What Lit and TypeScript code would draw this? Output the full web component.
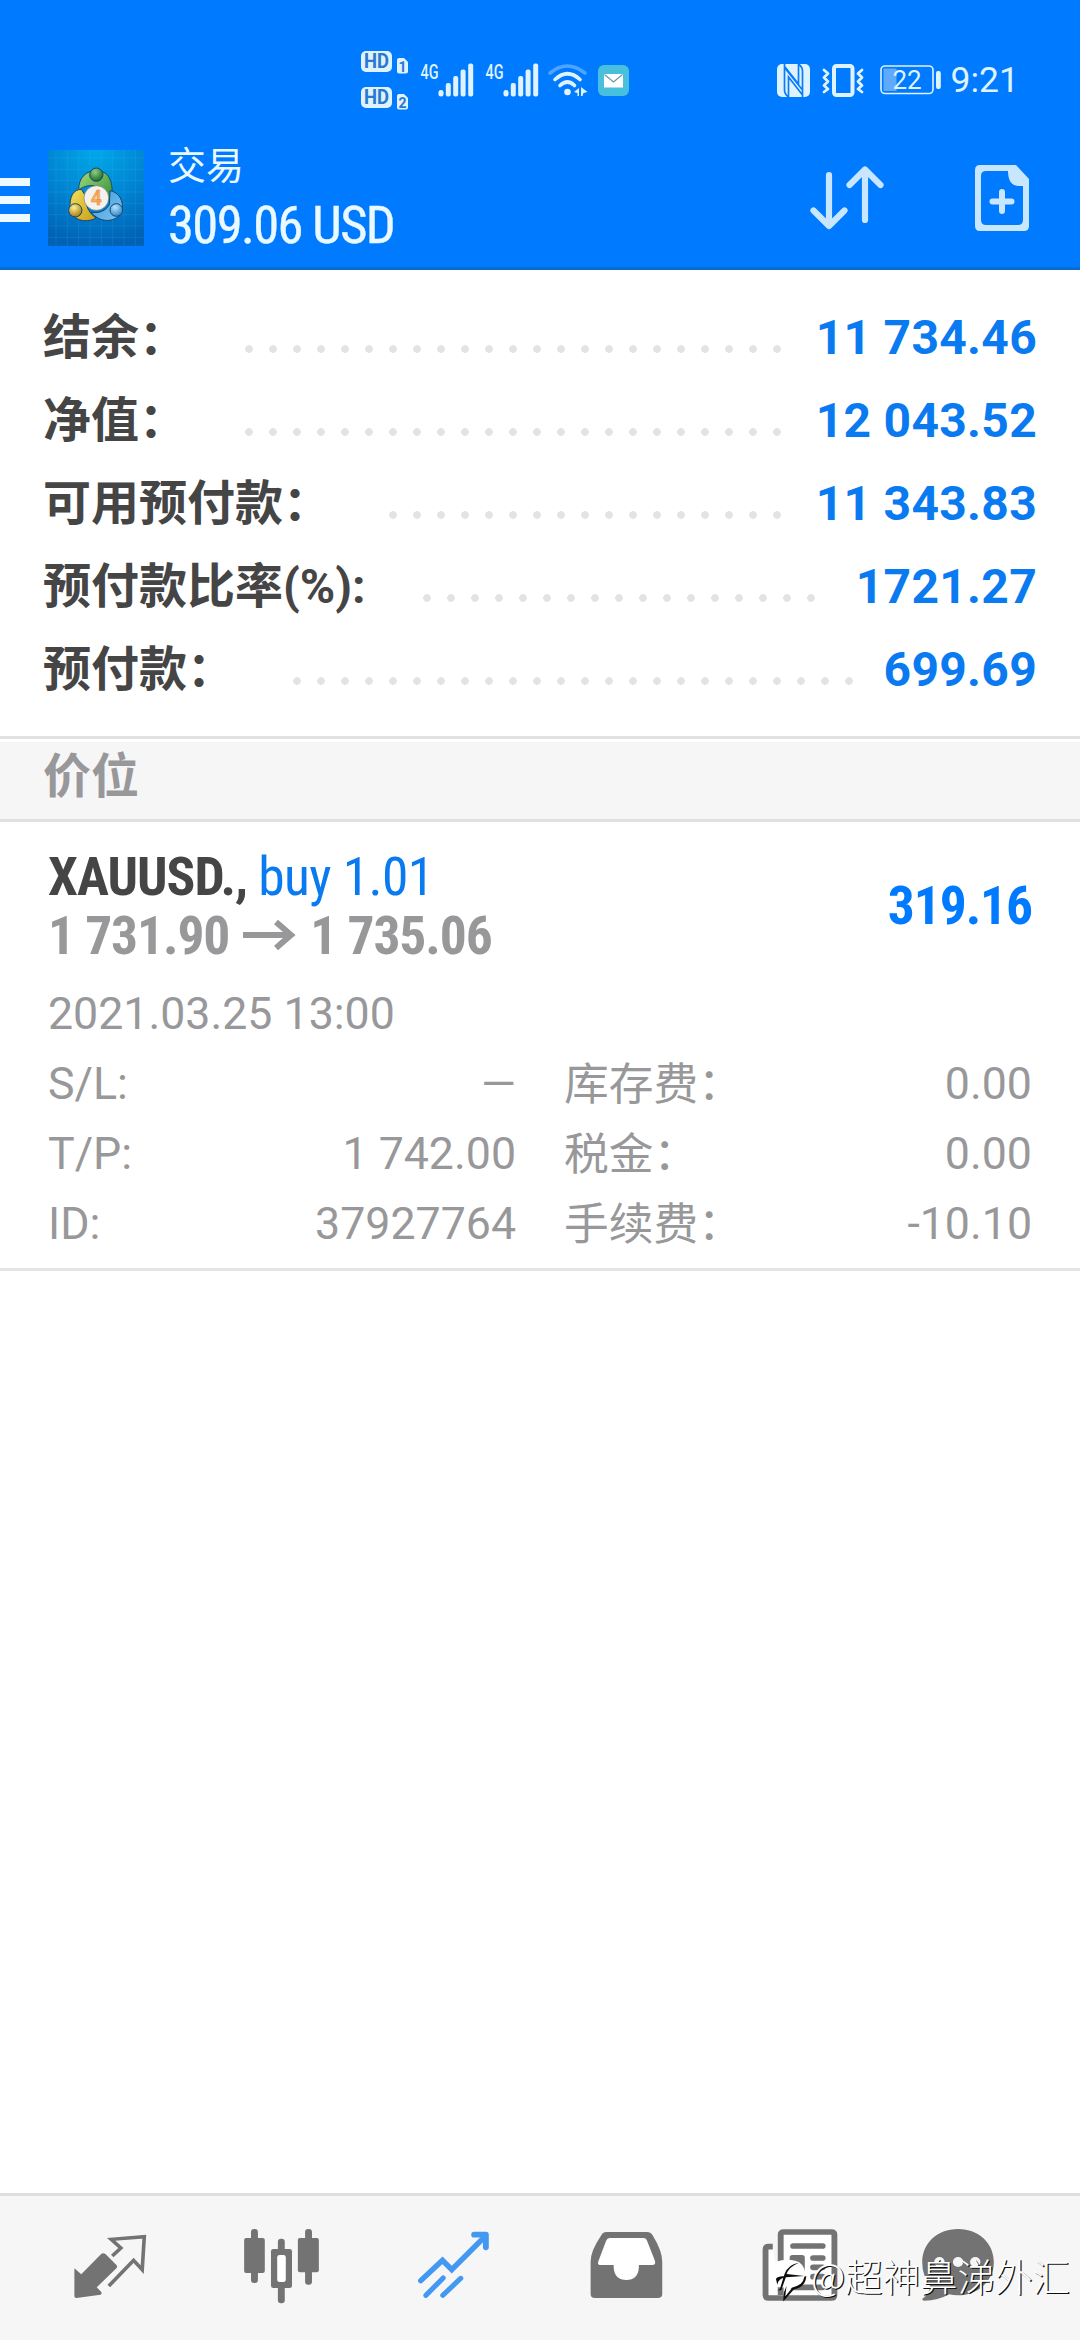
import { LitElement, html, svg, css } from "lit";
import { customElement, property } from "lit/decorators.js";

interface SummaryRow {
  label: string;
  value: string;
  dots: number;
}

const SUMMARY: SummaryRow[] = [
  { label: "结余：", value: "11 734.46", dots: 23 },
  { label: "净值：", value: "12 043.52", dots: 23 },
  { label: "可用预付款：", value: "11 343.83", dots: 17 },
  { label: "预付款比率(%):", value: "1721.27", dots: 17 },
  { label: "预付款：", value: "699.69", dots: 24 },
];

const DETAILS: [string, string][] = [
  ["S/L:", "—"],
  ["库存费：", "0.00"],
  ["T/P:", "1 742.00"],
  ["税金：", "0.00"],
  ["ID:", "37927764"],
  ["手续费：", "-10.10"],
];

@customElement("status-bar")
export class StatusBar extends LitElement {
  static styles = css`
    :host {
      display: flex;
      align-items: center;
      height: 58px;
      padding: 51px 60px 0 361px;
      color: #dff3ff;
      font-family: Roboto, "Liberation Sans", sans-serif;
    }
    svg {
      display: block;
      flex: none;
      overflow: visible;
    }
    .hd {
      margin-right: 12px;
    }
    .signal {
      margin-right: 11px;
    }
    .wifi {
      margin-left: -2px;
    }
    .mail {
      margin: 0 148px 0 9.5px;
    }
    .vibrate {
      margin: 0 16px 0 12px;
    }
    .clock {
      margin-left: 10px;
      font-size: 35.5px;
      line-height: 58px;
      white-space: nowrap;
    }
  `;

  private signal() {
    return html`<svg class="signal" width="54" height="34" viewBox="0 0 54 34" fill="currentColor">
      <text x="0.5" y="15.5" font-size="20" font-weight="500" textLength="18" lengthAdjust="spacingAndGlyphs">4G</text>
      <rect x="18.5" y="27" width="5" height="6.5" rx="2.3" />
      <rect x="25.8" y="20" width="5" height="13.5" rx="2" />
      <rect x="33.2" y="13" width="5" height="20.5" rx="2" />
      <rect x="40.6" y="6.5" width="5" height="27" rx="2" />
      <rect x="48.2" y="0.5" width="5" height="33" rx="2" />
    </svg>`;
  }

  private hd(y: number, n: string) {
    return svg`<g>
      <rect x="0" y=${y} width="31" height="21" rx="5" fill="currentColor" />
      <text x="3" y=${y + 17.3} font-size="19.5" font-weight="700" fill="#2a78cf" textLength="25" lengthAdjust="spacingAndGlyphs">HD</text>
      <path d="M36 ${y + 9}q0-2 2-2h5l4 4v9.500q0 2-2 2h-7q-2 0-2-2z" fill="currentColor" />
      <text x="41.500" y=${y + 20.5} font-size="14" font-weight="700" fill="#2a78cf" text-anchor="middle">${n}</text>
    </g>`;
  }

  render() {
    return html`
      <svg class="hd" width="47" height="58" viewBox="0 0 47 58">${this.hd(0, "1")}${this.hd(36, "2")}</svg>
      ${this.signal()}${this.signal()}
      <svg class="wifi" width="40" height="33" viewBox="0 0 40 33" fill="none" stroke="currentColor" stroke-width="3.6" stroke-linecap="round">
        <path d="M2 9Q19 -5 37 9" opacity=".35" />
        <path d="M7 15.500Q19.500 4 32 15.500" />
        <path d="M12 21.500Q19.500 14.500 26.500 21.500" />
        <circle cx="19.500" cy="28" r="3.300" fill="currentColor" stroke="none" />
        <path d="M26 28l5-4v8h-1.500v-3zM33 23l6.500 5-4 1-1 3h-1.500z" fill="currentColor" stroke="none" />
      </svg>
      <svg class="mail" width="31" height="31" viewBox="0 0 31 31">
        <rect width="31" height="31" rx="6" fill="#48bfdc" />
        <rect x="6" y="9" width="19" height="13.500" fill="#fff" />
        <path d="M6.500 9.500l9 7.500 9-7.500" fill="none" stroke="#5e9aa8" stroke-width="1.100" />
      </svg>
      <svg width="33" height="33" viewBox="0 0 33 33">
        <rect width="33" height="33" rx="5" fill="currentColor" />
        <path d="M7.500 0V26Q7.500 30 11.500 33M25.500 33V7Q25.500 3 21.500 0M7.500 3.500L25.500 26M11.500 33V13L25.500 31M21.500 0V20L8 3" fill="none" stroke="#0a7cfb" stroke-width="1.700" />
      </svg>
      <svg class="vibrate" width="42" height="33" viewBox="0 0 42 33" fill="none" stroke="currentColor" stroke-width="3.200" stroke-linejoin="round" stroke-linecap="round">
        <rect x="12" y="2" width="18.500" height="29" rx="2.500" stroke-width="4" />
        <path d="M2 6l4 3.500-4 4 4 4-4 4 4 3.500-4 3M40 6l-4 3.500 4 4-4 4 4 4-4 3.500 4 3" stroke-width="2.800" />
      </svg>
      <svg width="61" height="30" viewBox="0 0 61 30">
        <rect x="1" y="1" width="52" height="27.500" rx="4" fill="none" stroke="currentColor" stroke-width="1.600" />
        <rect x="3.500" y="3.500" width="13" height="22.500" fill="#60a9fb" />
        <rect x="56" y="6" width="4.800" height="18" rx="2" fill="currentColor" />
        <text x="27" y="24" font-size="26" fill="currentColor" text-anchor="middle">22</text>
      </svg>
      <span class="clock">9:21</span>
    `;
  }
}

@customElement("title-bar")
export class TitleBar extends LitElement {
  static styles = css`
    :host {
      display: flex;
      align-items: center;
      height: 116px;
      padding: 31px 51px 11px 0;
      border-bottom: 3px solid #0a6bd2;
      color: #e9f9ff;
      font-family: Roboto, "Noto Sans CJK SC", sans-serif;
    }
    svg {
      display: block;
      flex: none;
    }
    .menu {
      display: flex;
      flex-direction: column;
      gap: 10px;
      width: 30px;
      margin: 4px 18px 0 0;
    }
    .menu i {
      height: 8px;
      background: #eefaff;
    }
    .titles {
      flex: 1;
      margin-left: 24px;
      white-space: nowrap;
    }
    .title {
      font-size: 38px;
      line-height: 53px;
      padding-bottom: 2px;
    }
    .balance {
      font-family: "Roboto Condensed", Roboto, sans-serif;
      font-stretch: 75%;
      font-size: 52.5px;
      line-height: 61px;
      letter-spacing: -1.6px;
      -webkit-text-stroke: 0.4px currentColor;
    }
    .sort {
      margin-right: 91px;
    }
  `;

  render() {
    const grid = [24, 58, 92, 126, 160, 194, 228, 262];
    return html`
      <div class="menu"><i></i><i></i><i></i></div>
      <svg width="96" height="96" viewBox="0 0 288 288">
        <defs>
          <radialGradient id="bg" cx=".5" cy="0" r="1">
            <stop offset="0" stop-color="#00a9ea" />
            <stop offset=".55" stop-color="#0083d2" />
            <stop offset="1" stop-color="#0062b4" />
          </radialGradient>
          <linearGradient id="gr" x1="0" y1="0" x2="1" y2="1"><stop offset="0" stop-color="#a5dc7c" /><stop offset="1" stop-color="#2b8a32" /></linearGradient>
          <linearGradient id="ye" x1="0" y1="0" x2="1" y2="1"><stop offset="0" stop-color="#f4e25a" /><stop offset="1" stop-color="#c99c17" /></linearGradient>
          <linearGradient id="bl" x1="0" y1="0" x2="1" y2="1"><stop offset="0" stop-color="#3f97d8" /><stop offset="1" stop-color="#7cc6f2" /></linearGradient>
          <radialGradient id="gb" cx=".4" cy=".3" r=".7"><stop offset="0" stop-color="#8fd07e" /><stop offset="1" stop-color="#1c6b2b" /></radialGradient>
          <radialGradient id="yb" cx=".4" cy=".3" r=".7"><stop offset="0" stop-color="#fff09a" /><stop offset="1" stop-color="#a87b0c" /></radialGradient>
          <radialGradient id="bb" cx=".4" cy=".3" r=".7"><stop offset="0" stop-color="#b5e4ff" /><stop offset="1" stop-color="#2f86c6" /></radialGradient>
        </defs>
        <rect width="288" height="288" fill="url(#bg)" />
        ${grid.map((p) => svg`<path d="M${p} 0V288M0 ${p}H288" stroke="#5fc6f5" stroke-width="2" opacity=".2" />`)}
        <g stroke="#17486e" stroke-width="3" stroke-linejoin="round">
          <path d="M92 120C92 82 114 62 146 62C180 62 196 92 192 138L174 158C170 128 160 112 140 108C118 104 104 112 92 120Z" fill="url(#gr)" />
          <path d="M100 118C76 118 64 140 66 178L82 202C94 214 124 216 144 204C124 190 112 170 114 140Z" fill="url(#ye)" />
          <path d="M186 122C208 126 222 142 224 172L216 196C196 214 160 222 128 186C144 190 170 188 184 164Z" fill="url(#bl)" />
          <circle cx="145" cy="74" r="20" fill="url(#gb)" />
          <circle cx="82" cy="181" r="20" fill="url(#yb)" />
          <circle cx="205" cy="180" r="19" fill="url(#bb)" />
        </g>
        <circle cx="145" cy="144" r="37" fill="#f4f1ee" stroke="#77807c" stroke-width="2" />
        <text x="145" y="165" font-size="58" font-weight="700" text-anchor="middle" fill="#ffab57" stroke="#d98a45" stroke-width="1">4</text>
      </svg>
      <div class="titles">
        <div class="title">交易</div>
        <div class="balance">309.06 USD</div>
      </div>
      <svg class="sort" width="74" height="66" viewBox="0 0 74 66" fill="none" stroke="#c8e7ff" stroke-width="6.200" stroke-linecap="round" stroke-linejoin="round">
        <path d="M19 10V60.500M3.500 45.500L19 61 34.500 45.500" />
        <path d="M55 55V4.500M39.500 20L55 4.500 70.500 20" />
      </svg>
      <svg width="54" height="66" viewBox="0 0 54 66">
        <path fill="#c8e7ff" fill-rule="evenodd" d="M5 0H41L54 14V61Q54 66 49 66H5Q0 66 0 61V5Q0 0 5 0ZM11 6Q6 6 6 11V55Q6 60 11 60H43Q48 60 48 55V21H43Q33 20 33 6Z" />
        <path d="M27 27V46M17.500 36.500H36.500" stroke="#c8e7ff" stroke-width="6" stroke-linecap="round" />
      </svg>
    `;
  }
}

@customElement("summary-row")
export class SummaryRowElement extends LitElement {
  @property({ attribute: false }) row!: SummaryRow;

  static styles = css`
    :host {
      display: flex;
      height: 83px;
      font: bold 48px/83px Roboto, "Noto Sans CJK SC", sans-serif;
      white-space: nowrap;
    }
    .label {
      color: #454545;
      line-height: 84px;
    }
    .dots {
      height: 8px;
      margin: 49px 0 0 49.5px;
      background: radial-gradient(circle closest-side, #e3e3e3 88%, transparent 100%) 0 0 / 24px 8px repeat-x;
    }
    .value {
      margin-left: auto;
      color: #0a7af0;
      letter-spacing: 0.3px;
    }
  `;

  render() {
    const { label, value, dots } = this.row;
    return html`
      <span class="label">${label}</span>
      <span class="dots" style="width:${dots * 24}px"></span>
      <span class="value">${value}</span>
    `;
  }
}

@customElement("nav-bar")
export class NavBar extends LitElement {
  static styles = css`
    :host {
      display: grid;
      grid-template-columns: repeat(6, 172px);
      height: 144px;
      padding: 0 24px;
      border-top: 3px solid #dedede;
      background: #f6f6f7;
      position: relative;
      color: #737373;
    }
    .icon {
      display: block;
      width: 172px;
      height: 144px;
    }
    .active {
      color: #4398f2;
    }
    .watermark {
      position: absolute;
      right: 10px;
      bottom: 35px;
      display: flex;
      align-items: center;
      color: #fff;
      font: 300 37.5px/60px "Noto Sans CJK SC", sans-serif;
      text-shadow: 1.3px 1.3px 0 #111;
      white-space: nowrap;
    }
    .leaf {
      display: block;
      margin: 9px 4px 0 0;
    }
  `;

  private icon(x: number, content: unknown, active = false) {
    return html`<svg class="icon ${active ? "active" : ""}" viewBox="${x} 48 499.5 432" preserveAspectRatio="none" fill="currentColor">${content}</svg>`;
  }

  render() {
    return html`
      ${this.icon(69.7, svg`
        <path d="M216 265L236 283L293 223Q300 216 307 223L338 255Q342 260 338 265L281 322L294 336Q297 341 292 344L222 354Q216 354 216 348Z" />
        <path d="M326 228L351 204L323 178L419 170L413 269L388 241L316 318" fill="none" stroke="currentColor" stroke-width="10.500" />
      `)}
      ${this.icon(569.2, svg`
        <rect x="709" y="174" width="60" height="105" rx="6" />
        <rect x="729" y="147" width="20" height="162" rx="9" />
        <rect x="865" y="174" width="61" height="103" rx="6" />
        <rect x="886" y="147" width="20" height="167" rx="9" />
        <rect x="807" y="176" width="20" height="194" rx="9" />
        <rect x="787" y="207" width="61" height="117" rx="7" />
        <rect x="805" y="225" width="25" height="81" rx="7" fill="#fff" />
      `)}
      ${this.icon(1068.7, svg`
        <g fill="none" stroke="currentColor" stroke-width="16" stroke-linecap="round" stroke-linejoin="miter">
          <path d="M1222 302L1285 241L1312 269L1408 170" />
          <path d="M1377 164H1411V202" stroke-width="17" stroke-linejoin="round" />
          <path d="M1237 346L1287 294M1286 346L1338 295" stroke-width="15" />
        </g>
      `, true)}
      ${this.icon(0, svg`
        <path d="M193 156H311Q321 156 327 166Q355 213 355 245V342Q355 354 342 354H159Q147 354 147 342V245Q147 213 178 166Q183 156 193 156Z" />
        <path d="M202 174H301Q307 174 310 180L334 243Q337 255 326 255H287V264Q284 300 251 300Q217 300 214 264V255H177Q166 255 169 245L192 182Q195 174 202 174Z" fill="#fff" />
      `)}
      ${this.icon(499.5, svg`
        <path d="M676 200H664Q655 200 655 209V344Q655 354 664 354H846Q855 354 855 344V164Q855 156 846 156H708Q699 156 699 164V345" fill="#fff" stroke="currentColor" stroke-width="17" />
        <g fill="none" stroke="currentColor" stroke-width="17" stroke-linecap="round">
          <path d="M735 198H821M793 234H821M793 262H821M793 290H821M735 322H821" />
        </g>
        <rect x="725" y="225" width="44" height="70" rx="8" />
      `)}
      ${this.icon(999, svg`
        <path d="M1214 147C1275 147 1318 190 1318 247C1318 304 1270 346 1214 346Q1200 346 1188 343Q1156 362 1116 362Q1106 361 1113 354Q1130 342 1133 318Q1110 286 1110 247C1110 190 1153 147 1214 147Z" />
        <circle cx="1160" cy="246" r="15" fill="#f6f6f7" />
        <circle cx="1214" cy="246" r="15" fill="#f6f6f7" />
        <circle cx="1264" cy="246" r="15" fill="#f6f6f7" />
      `)}
      <div class="watermark">
        <svg class="leaf" width="37" height="44" viewBox="0 0 112 132">
          <path d="M20 10Q48 0 76 8Q104 14 108 50Q102 82 64 90L42 122L46 88Q10 94 2 60Q0 30 20 10Z" fill="#fff" />
          <path d="M22 97L30 93L44 48Q56 18 88 14Q58 26 50 48L104 54L48 58L34 97ZM18 62Q24 54 46 54V59Q26 60 22 80ZM110 54Q108 88 72 95L40 131L42 104L50 84L46 116L68 89Q100 82 104 56Z" fill="#0c0c0c" />
        </svg>
        <span>@超神鼻涕外汇</span>
      </div>
    `;
  }
}

@customElement("app-root")
export class AppRoot extends LitElement {
  static styles = css`
    :host {
      display: flex;
      flex-direction: column;
      box-sizing: border-box;
      width: 1080px;
      height: 2340px;
      overflow: hidden;
      background: #fff;
      font-family: Roboto, "Noto Sans CJK SC", sans-serif;
    }
    .header {
      background: #007aff;
    }
    .summary {
      box-sizing: border-box;
      height: 466px;
      padding: 26px 43px 0;
    }
    .section {
      box-sizing: border-box;
      height: 86px;
      padding: 0 43px 4px;
      border-top: 3px solid #e1e1e1;
      border-bottom: 3px solid #e1e1e1;
      background: linear-gradient(#fff 3px, #f6f6f7 3px);
      color: #98989a;
      font-size: 48px;
      font-weight: bold;
      line-height: 76px;
    }
    .position {
      box-sizing: border-box;
      height: 449px;
      padding: 24.5px 48px 0;
      border-bottom: 3px solid #e4e4e4;
      color: #98989a;
      font-size: 44.7px;
      line-height: 70px;
      white-space: nowrap;
    }
    .deal {
      display: flex;
      align-items: center;
      justify-content: space-between;
      margin-bottom: 14px;
      font: bold 53.5px/59px "Roboto Condensed", Roboto, sans-serif;
      font-stretch: 75%;
      letter-spacing: -1.1px;
    }
    .symbol {
      color: #454545;
      letter-spacing: -1px;
    }
    .side {
      color: #0a7af0;
      font-weight: 400;
      letter-spacing: -0.6px;
    }
    .prices {
      display: flex;
      align-items: center;
      gap: 14px;
    }
    .profit {
      color: #007aff;
    }
    .details {
      display: grid;
      grid-template-columns: 1fr 1fr;
      column-gap: 48px;
    }
    .detail {
      display: flex;
      justify-content: space-between;
      height: 70px;
    }
    .detail:nth-child(even) .key {
      line-height: 72px;
    }
    .spacer {
      flex: 1;
    }
  `;

  render() {
    return html`
      <div class="header">
        <status-bar></status-bar>
        <title-bar></title-bar>
      </div>
      <div class="summary">
        ${SUMMARY.map((row) => html`<summary-row .row=${row}></summary-row>`)}
      </div>
      <div class="section">价位</div>
      <div class="position">
        <div class="deal">
          <div>
            <div><span class="symbol">XAUUSD.,</span> <span class="side">buy 1.01</span></div>
            <div class="prices">
              <span>1 731.90</span>
              <svg width="53" height="30" viewBox="0 0 53 30" fill="none" stroke="currentColor" stroke-width="6">
                <path d="M0 15H49M33 2L48 15L33 28" />
              </svg>
              <span>1 735.06</span>
            </div>
          </div>
          <span class="profit">319.16</span>
        </div>
        <div>2021.03.25 13:00</div>
        <div class="details">
          ${DETAILS.map(([k, v]) => html`<div class="detail"><span class="key">${k}</span><span>${v}</span></div>`)}
        </div>
      </div>
      <div class="spacer"></div>
      <nav-bar></nav-bar>
    `;
  }
}
